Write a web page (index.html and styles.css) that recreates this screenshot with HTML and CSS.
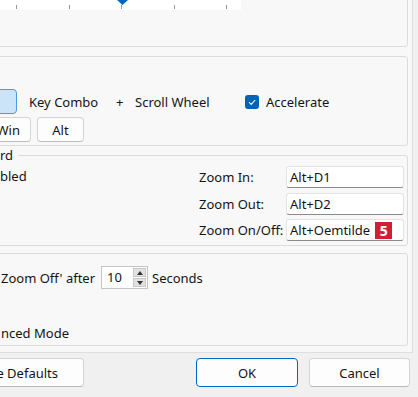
FILE: index.html
```html
<!DOCTYPE html>
<html lang="en">
<head>
    <meta charset="UTF-8">
    <meta name="viewport" content="width=device-width, initial-scale=1.0">
    <title>Zoom Options</title>
    <link rel="stylesheet" href="styles.css">
</head>
<body>
    <div class="dialog">
        <div class="tabpage">
            <div class="group slider-group">
                <div class="track">
                    <svg class="thumb" width="11" height="12" viewBox="0 0 11 12">
                        <polygon points="0,0 11,0 11,7 5.5,12 0,7" fill="#0067c0"/>
                    </svg>
                    <div class="ticks">
                        <span></span><span></span><span></span><span></span><span></span>
                    </div>
                </div>
            </div>

            <div class="group combo-group">
                <div class="combo-row">
                    <button class="toggle on"></button>
                    <span class="key-combo">Key Combo</span>
                    <span class="plus">+</span>
                    <span class="wheel">Scroll Wheel</span>
                    <label class="check">
                        <span class="box">
                            <svg width="14" height="14" viewBox="0 0 14 14">
                                <polyline points="4,7.2 6.2,9.4 10.2,5" fill="none" stroke="#fff" stroke-width="1.1"/>
                            </svg>
                        </span>
                        Accelerate
                    </label>
                </div>
                <div class="mod-row">
                    <button class="toggle win">Win</button>
                    <button class="toggle alt">Alt</button>
                </div>
            </div>

            <fieldset class="group keys-group">
                <legend>rd</legend>
                <div class="keys-body">
                    <div class="enabled">bled</div>
                    <div class="hotkeys">
                        <span class="hk-label">Zoom In:</span>
                        <div class="textbox">Alt+D1</div>
                        <span class="hk-label">Zoom Out:</span>
                        <div class="textbox">Alt+D2</div>
                        <span class="hk-label">Zoom On/Off:</span>
                        <div class="textbox">Alt+Oemtilde<span class="badge">5</span></div>
                    </div>
                </div>
            </fieldset>

            <div class="group auto-group">
                <div class="auto-row">
                    <span class="auto-label">Zoom Off' after</span>
                    <div class="spinner">
                        <span class="spin-value">10</span>
                        <div class="spin-buttons">
                            <span class="spin up"></span>
                            <span class="spin down"></span>
                        </div>
                    </div>
                    <span>Seconds</span>
                </div>
                <div class="advanced">nced Mode</div>
            </div>
        </div>

        <div class="actions">
            <button class="btn defaults">e Defaults</button>
            <button class="btn ok">OK</button>
            <button class="btn cancel">Cancel</button>
        </div>
    </div>
</body>
</html>
```

FILE: styles.css
```css
* {
    box-sizing: border-box;
}

body {
    margin: 0;
    width: 418px;
    height: 397px;
    overflow: hidden;
    background-color: #f0f0f0;
    color: #141414;
    font-family: "Noto Sans", Arial, sans-serif;
    font-size: 13px;
}

button {
    font-family: inherit;
    font-size: inherit;
    color: inherit;
    padding: 0;
}

.dialog {
    margin-left: -12px;
    width: 430px;
}

.tabpage {
    width: 425px;
    height: 353px;
    background-color: #f8f8f8;
    border-right: 1px solid #dedede;
    border-bottom: 1px solid #dedede;
    padding: 0 4px 0 6px;
    display: flex;
    flex-direction: column;
}

.group {
    border: 1px solid #dcdcdc;
    border-radius: 3px;
    margin: 0;
}

/* slider */
.slider-group {
    margin-top: -20px;
    height: 67px;
    padding-left: 5px;
}

.track {
    position: relative;
    margin-top: 10px;
    width: 241px;
    height: 19px;
    background-color: #fff;
}

.thumb {
    position: absolute;
    left: 117px;
    top: 2px;
}

.ticks {
    position: absolute;
    left: 0;
    right: 0;
    top: 14px;
    height: 4px;
    display: flex;
    justify-content: space-between;
    padding: 0 14px 0 16px;
}

.ticks span {
    width: 1px;
    height: 4px;
    background-color: #9a9a9a;
}

/* key combo */
.combo-group {
    margin-top: 9px;
    height: 90px;
    padding: 32px 3px 3px 0;
}

.combo-row {
    display: flex;
    align-items: center;
    height: 25px;
}

.toggle {
    height: 25px;
    background-color: #fdfdfd;
    border: 1px solid #d4d4d4;
    border-bottom-color: #bdbdbd;
    border-radius: 4px;
}

.toggle.on {
    width: 22px;
    background-color: #cce4f7;
    border: 1px solid #4c9be0;
}

.key-combo {
    width: 87px;
    margin-left: 12px;
}

.plus {
    width: 19px;
}

.wheel {
    width: 110px;
}

.check {
    display: flex;
    align-items: center;
}

.check .box {
    width: 14px;
    height: 14px;
    margin-right: 7px;
    border-radius: 3px;
    background-color: #0063b8;
    display: flex;
}

.mod-row {
    display: flex;
    gap: 6px;
    margin-top: 3px;
}

.toggle.win {
    width: 36px;
    text-align: right;
    padding-right: 10px;
}

.toggle.alt {
    width: 47px;
}

/* keyboard */
.keys-group {
    margin-top: 1px;
    height: 99px;
    padding: 3px 3px 4px 5px;
}

.keys-group legend {
    padding: 0 5px 0 0;
    line-height: 16px;
}

.keys-body {
    display: flex;
    justify-content: space-between;
}

.enabled {
    line-height: 20px;
}

.hotkeys {
    display: grid;
    grid-template-columns: 87px 118px;
    grid-auto-rows: 22px;
    row-gap: 4.5px;
    align-items: center;
}

.textbox {
    height: 22px;
    display: flex;
    align-items: center;
    padding-left: 3px;
    background-color: #fff;
    border: 1px solid #e3e3e3;
    border-bottom-color: #8a8a8a;
    border-radius: 3px;
}

.badge {
    width: 17px;
    height: 17px;
    margin-left: 5px;
    background-color: #cf2133;
    color: #fff;
    font-weight: bold;
    font-size: 14px;
    display: flex;
    align-items: center;
    justify-content: center;
}

/* automatic zoom off */
.auto-group {
    margin-top: 7px;
    height: 93px;
    padding: 12px 3px 3px 6px;
}

.auto-row {
    display: flex;
    align-items: center;
    height: 23px;
}

.auto-label {
    width: 100px;
    white-space: nowrap;
}

.spinner {
    display: flex;
    width: 47px;
    height: 23px;
    margin-right: 4px;
    background-color: #fff;
    border: 1px solid #c4c4c4;
}

.spin-value {
    flex: 1;
    padding-left: 5px;
    line-height: 21px;
}

.spin-buttons {
    width: 14px;
    display: flex;
    flex-direction: column;
    gap: 1px;
    padding: 1px 1px 1px 0;
}

.spin {
    flex: 1;
    background-color: #e1e1e1;
    border: 1px solid #c8c8c8;
    display: flex;
    align-items: center;
    justify-content: center;
}

.spin::after {
    content: '';
    border-left: 3px solid transparent;
    border-right: 3px solid transparent;
}

.spin.up::after {
    border-bottom: 4px solid #333;
}

.spin.down::after {
    border-top: 4px solid #333;
}

.advanced {
    margin-top: 35px;
    line-height: 18px;
}

/* bottom buttons */
.actions {
    display: flex;
    margin-top: 5px;
    padding-right: 8px;
}

.btn {
    height: 29px;
    background-color: #fdfdfd;
    border: 1px solid #d4d4d4;
    border-bottom-color: #b8b8b8;
    border-radius: 4px;
}

.btn.defaults {
    width: 104px;
    margin-left: -8px;
    text-align: right;
    padding-right: 25px;
}

.btn.ok {
    width: 102px;
    margin-left: auto;
    border: 1px solid #0067c0;
}

.btn.cancel {
    width: 101px;
    margin-left: 11px;
}
```
